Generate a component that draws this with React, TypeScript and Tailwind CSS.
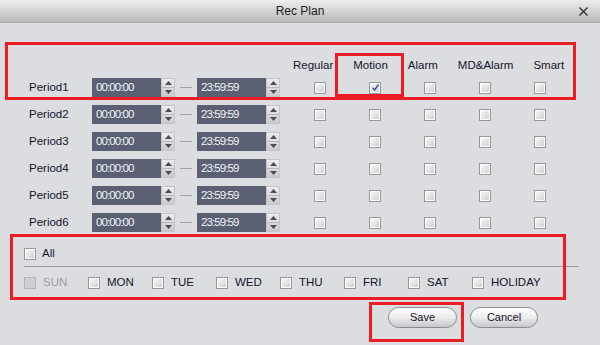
import React from 'react';

const font = { fontFamily: '"Liberation Sans", Arial, sans-serif' };

const Check: React.FC<{ checked?: boolean; disabled?: boolean }> = ({ checked, disabled }) => (
  <div
    className={`w-[12px] h-[12px] shrink-0 border flex items-center justify-center ${
      disabled
        ? 'border-[#b4b4b4] bg-[#cfd0d3]'
        : 'border-[#979797] bg-gradient-to-br from-[#fbfbfb] to-[#cdcdcd] shadow-[inset_0_0_0_1px_#ffffff]'
    }`}
  >
    {checked && (
      <svg width="9" height="9" viewBox="0 0 9 9">
        <path d="M1.5 4.8 L3.6 7 L7.6 1.5" fill="none" stroke="#3b4a9c" strokeWidth="1.3" />
      </svg>
    )}
  </div>
);

const Spinner: React.FC = () => (
  <div className="w-[14px] h-[19px] flex flex-col bg-gradient-to-b from-[#ececec] to-[#c9cacd] border border-[#c4c5c8]">
    <div className="flex-1 flex items-center justify-center border-b border-[#b8b9bc]">
      <svg width="7" height="4" viewBox="0 0 7 4"><path d="M0 4 L3.5 0 L7 4 Z" fill="#4a4d55" /></svg>
    </div>
    <div className="flex-1 flex items-center justify-center">
      <svg width="7" height="4" viewBox="0 0 7 4"><path d="M0 0 L3.5 4 L7 0 Z" fill="#4a4d55" /></svg>
    </div>
  </div>
);

const TimeBox: React.FC<{ value: string }> = ({ value }) => (
  <div className="flex items-center">
    <div className="w-[69px] h-[19px] bg-[#5a6071] text-[#f2f4fa] text-[11.5px] tracking-[-0.9px] pl-[4px] flex items-center">
      {value}
    </div>
    <Spinner />
  </div>
);

const periods = ['Period1', 'Period2', 'Period3', 'Period4', 'Period5', 'Period6'];
const days = ['SUN', 'MON', 'TUE', 'WED', 'THU', 'FRI', 'SAT', 'HOLIDAY'];

export default function App() {
  return (
    <div className="relative w-[600px] h-[345px] overflow-hidden bg-[#dcdde1] text-[#15152a] text-[11.5px]" style={font}>
      {/* title bar */}
      <div className="relative h-[23px] flex items-center justify-center bg-gradient-to-b from-[#eeeeee] via-[#d2d2d2] to-[#b9b9b9] border-b border-[#a9a9a9]">
        <span className="text-[12px] text-[#1e1e1e]">Rec Plan</span>
        <svg className="absolute right-[12px] top-[7px]" width="9" height="9" viewBox="0 0 9 9">
          <path d="M0.5 0.5 L8.5 8.5 M8.5 0.5 L0.5 8.5" stroke="#2a2a2a" strokeWidth="1.2" />
        </svg>
      </div>

      {/* column headers */}
      <div className="mt-[35px] h-[16px] flex items-center gap-[20px] pl-[293px]">
        <span>Regular</span>
        <span>Motion</span>
        <span>Alarm</span>
        <span>MD&amp;Alarm</span>
        <span>Smart</span>
      </div>

      {/* period rows */}
      <div className="flex flex-col">
        {periods.map((p, i) => (
          <div key={p} className="h-[27px] flex items-center">
            <span className="w-[92px] pl-[29px]">{p}</span>
            <TimeBox value="00:00:00" />
            <div className="w-[12px] h-px bg-[#a3a4a8] mx-[5px]" />
            <TimeBox value="23:59:59" />
            <div className="flex items-center gap-[43px] ml-[34px]">
              {[0, 1, 2, 3, 4].map((c) => (
                <Check key={c} checked={i === 0 && c === 1} />
              ))}
            </div>
          </div>
        ))}
      </div>

      {/* all + days */}
      <div className="mt-[8px] h-[20px] flex items-center gap-[6px] pl-[24px]">
        <Check />
        <span>All</span>
      </div>
      <div className="mt-[2px] ml-[24px] w-[555px] h-px bg-[#9c9da1]" />
      <div className="mt-[6px] h-[20px] flex items-center pl-[24px]">
        {days.map((d, i) => (
          <div key={d} className="w-[64px] flex items-center gap-[7px]">
            <Check disabled={i === 0} />
            <span className={i === 0 ? 'text-[#9d9ea3]' : ''}>{d}</span>
          </div>
        ))}
      </div>

      {/* buttons */}
      <div className="mt-[14px] flex items-center gap-[13px] pl-[388px]">
        <button className="w-[69px] h-[21px] rounded-full border border-[#8c8d90] bg-gradient-to-b from-[#ffffff] via-[#ececec] to-[#c6c7ca] text-[11px] text-[#15152a]">
          Save
        </button>
        <button className="w-[68px] h-[21px] rounded-full border border-[#8c8d90] bg-gradient-to-b from-[#ffffff] via-[#ececec] to-[#c6c7ca] text-[11px] text-[#15152a]">
          Cancel
        </button>
      </div>

      {/* red annotation boxes */}
      <div className="absolute left-[5px] top-[42px] w-[571px] h-[58px] border-[3px] border-[#ec1c24] pointer-events-none" />
      <div className="absolute left-[335px] top-[53px] w-[69px] h-[44px] border-[3px] border-[#ec1c24] pointer-events-none" />
      <div className="absolute left-[10px] top-[234px] w-[556px] h-[66px] border-[3px] border-[#ec1c24] pointer-events-none" />
      <div className="absolute left-[369px] top-[302px] w-[95px] h-[40px] border-[3px] border-[#ec1c24] pointer-events-none" />
    </div>
  );
}
